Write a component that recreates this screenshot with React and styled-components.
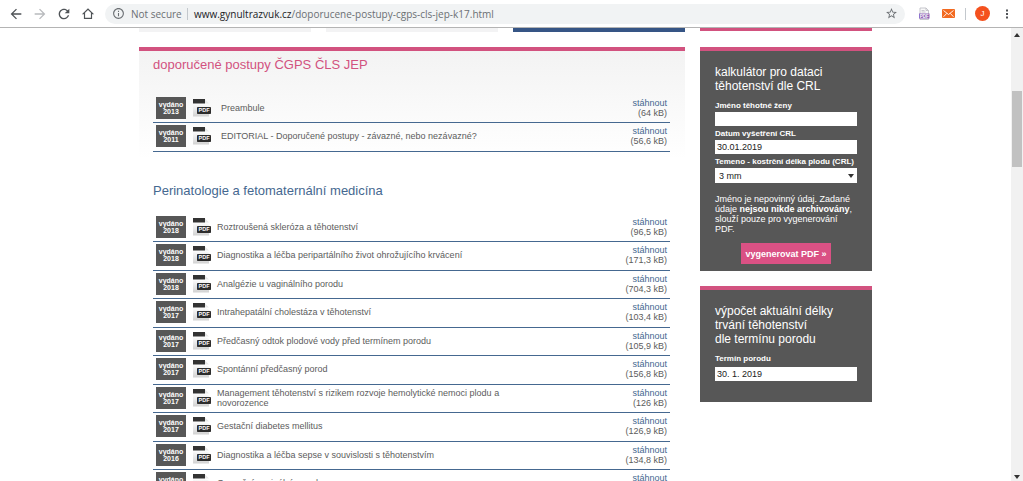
import React from "react";
import styled, { createGlobalStyle } from "styled-components";

const color = {
  pink: "#d2527f",
  blue: "#456890",
  navy: "#365585",
  dark: "#575757",
  text: "#5c5c5c",
};

const GlobalStyle = createGlobalStyle`
  *, *::before, *::after { box-sizing: border-box; }
  body { margin: 0; background: #fff; font-family: "Liberation Sans", Arial, sans-serif; }
  button, input, select { font-family: inherit; }
`;

const Browser = styled.div`
  display: flex;
  flex-direction: column;
  height: 100vh;
  overflow: hidden;
`;

const Toolbar = styled.header`
  display: flex;
  align-items: center;
  flex: none;
  height: 28px;
  padding: 0 4px;
  border-bottom: 1px solid #b4b4b4;
  background: #fff;
`;

const ToolButton = styled.button`
  display: flex;
  align-items: center;
  justify-content: center;
  width: 24px;
  height: 24px;
  padding: 0;
  border: 0;
  background: none;
  color: ${(p) => (p.$faint ? "#b8babd" : "#4f5357")};
`;

const AddressBar = styled.div`
  display: flex;
  align-items: center;
  flex: 1;
  min-width: 0;
  height: 20px;
  margin: 0 7px 0 5px;
  padding: 0 7px;
  border-radius: 10px;
  background: #f1f3f4;
  color: #6b6f73;
  font: 10px/20px "Open Sans", "Noto Sans", sans-serif;
  white-space: nowrap;
`;

const Security = styled.span`
  display: flex;
  align-items: center;
  gap: 6px;
  width: 75px;
`;

const Url = styled.span`
  flex: 1;
  min-width: 0;
  overflow: hidden;
  padding-left: 6px;
`;

const Host = styled.span`
  color: #202124;
`;

const Divider = styled.span`
  width: 1px;
  height: 12px;
  background: #c3c8cd;
`;

const ToolDivider = styled(Divider)`
  margin: 0 9px 0 5px;
`;

const Avatar = styled.button`
  width: 15px;
  height: 15px;
  margin-right: 5px;
  padding: 0;
  border: 0;
  border-radius: 50%;
  background: #f4511e;
  color: #fff;
  font-size: 8px;
  line-height: 15px;
`;

const Viewport = styled.div`
  display: flex;
  flex: 1;
  min-height: 0;
`;

const Page = styled.div`
  flex: 1;
  min-width: 0;
  overflow: hidden;
`;

const Columns = styled.div`
  display: grid;
  grid-template-columns: minmax(0, 1fr) 172px;
  gap: 15px;
  max-width: 733px;
  margin: 0 auto;
  align-items: start;
`;

const Stack = styled.div`
  display: flex;
  flex-direction: column;
  gap: 15px;
`;

const Tabs = styled.nav`
  display: grid;
  grid-template-columns: repeat(3, 1fr);
  gap: 15px;
`;

const Tab = styled.div`
  height: 4px;
  background: ${(p) => (p.$active ? color.navy : "#f3f3f4")};
`;

const BoxEnd = styled.div`
  height: 4px;
  border-top: 3px solid ${color.pink};
`;

const Article = styled.main`
  padding: 6px 15px 0 14px;
  border-top: 4px solid ${color.pink};
  background: linear-gradient(#f3f3f3, #fff) no-repeat 0 0 / 100% 108px;
`;

const Title = styled.h1`
  margin: 0 0 22px;
  color: ${color.pink};
  font-size: 13px;
  font-weight: 400;
  line-height: 16px;
`;

const Subtitle = styled.h2`
  margin: 31px 0 15px;
  color: ${color.blue};
  font-size: 13px;
  font-weight: 400;
  line-height: 16px;
`;

const DocTable = styled.table`
  width: 100%;
  border-spacing: 0;
  color: ${color.text};
  font-size: 9px;
  line-height: 10px;
`;

const DocRow = styled.tr`
  height: 28px;
  &:nth-child(even) { height: 29px; }
`;

const Cell = styled.td`
  padding: 0 0 2px;
  border-bottom: 1px solid ${color.blue};
  vertical-align: middle;
`;

const YearCell = styled(Cell)`
  width: 33px;
  padding-left: 3px;
`;

const Year = styled.div`
  width: 30px;
  height: 22px;
  padding-top: 4px;
  background: ${color.dark};
  color: #fff;
  font-size: 7px;
  font-weight: 700;
  line-height: 7px;
  text-align: center;
`;

const IconCell = styled(Cell)`
  width: 25px;
  padding-left: 7px;
  svg { display: block; }
`;

const NameCell = styled(Cell)`
  padding-left: ${(p) => (p.$wide ? 10 : 6)}px;
  padding-right: 90px;
`;

const FileCell = styled(Cell)`
  width: 60px;
  padding-right: 3px;
  text-align: right;
`;

const FileLink = styled.a`
  display: block;
  color: ${color.blue};
  text-decoration: none;
`;

const Box = styled.form`
  padding: 14px 15px ${(p) => (p.$roomy ? 21 : 7)}px;
  border-top: 4px solid ${color.pink};
  background: ${color.dark};
  color: #fff;
`;

const BoxTitle = styled.h2`
  margin: 0 0 8px;
  font-size: 12px;
  font-weight: 400;
  line-height: 14px;
`;

const Field = styled.label`
  display: flex;
  flex-direction: column;
  gap: ${(p) => (p.$roomy ? 3 : 1)}px;
  margin-bottom: ${(p) => (p.$roomy ? 0 : 3)}px;
  font-size: 8px;
  font-weight: 700;
  line-height: 10px;
  white-space: nowrap;
`;

const Input = styled.input`
  width: 100%;
  height: 14px;
  padding: 0 2px;
  border: 0;
  border-radius: 0;
  background: #fff;
  color: #222;
  font-size: 9px;
`;

const SelectFrame = styled.span`
  display: grid;
  align-items: center;
  height: 15px;
  background: #fff;
  color: #111;
  > * { grid-area: 1 / 1; }
  svg { justify-self: end; margin-right: 3px; pointer-events: none; }
`;

const Select = styled.select`
  width: 100%;
  height: 15px;
  padding: 0 4px;
  border: 0;
  border-radius: 0;
  appearance: none;
  background: #fff;
  color: #222;
  font-size: 9px;
`;

const Note = styled.p`
  margin: 11px 0 9px;
  font-size: 9px;
  line-height: 10px;
`;

const Submit = styled.button`
  display: block;
  height: 21px;
  margin: 0 auto;
  padding: 0 4px;
  border: 0;
  background: #da5184;
  color: #fff;
  font-size: 9px;
  font-weight: 700;
  white-space: nowrap;
`;

const Scrollbar = styled.div`
  display: flex;
  flex-direction: column;
  align-items: center;
  justify-content: space-between;
  width: 12px;
  padding: 4px 0 1px;
  background: #f1f1f1;
`;

const Track = styled.div`
  flex: 1;
  width: 10px;
  padding-top: 53px;
`;

const Thumb = styled.div`
  height: 76px;
  background: #c1c1c1;
`;

const paths = {
  back: "M20 11H7.83l5.59-5.59L12 4l-8 8 8 8 1.41-1.41L7.83 13H20v-2z",
  forward: "M12 4l-1.41 1.41L16.17 11H4v2h12.17l-5.58 5.59L12 20l8-8z",
  reload:
    "M17.65 6.35C16.2 4.9 14.21 4 12 4c-4.42 0-7.99 3.58-7.99 8s3.57 8 7.99 8c3.73 0 6.84-2.55 7.73-6h-2.08c-.82 2.33-3.04 4-5.65 4-3.31 0-6-2.69-6-6s2.69-6 6-6c1.66 0 3.14.69 4.22 1.78L13 11h7V4l-2.35 2.35z",
  home: "M12 5L17 10V18.500H7V10zM12 2L1.500 12.500H5V20.500H19V12.500H22.500z",
  info: "M11 7h2v2h-2zm0 4h2v6h-2zm1-9C6.48 2 2 6.48 2 12s4.48 10 10 10 10-4.48 10-10S17.52 2 12 2zm0 18c-4.41 0-8-3.59-8-8s3.59-8 8-8 8 3.59 8 8-3.59 8-8 8z",
  star: "M22 9.24l-7.19-.62L12 2 9.19 8.63 2 9.24l5.46 4.73L5.82 21 12 17.27 18.18 21l-1.63-7.03L22 9.24zM12 15.4l-3.76 2.27 1-4.28-3.32-2.88 4.38-.38L12 6.1l1.71 4.04 4.38.38-3.32 2.88 1 4.28L12 15.4z",
  more: "M10 3h4v4h-4zM10 10h4v4h-4zM10 17h4v4h-4z",
};

const Glyph = ({ name, size }) => (
  <svg width={size} height={size} viewBox="0 0 24 24" fill="currentColor" fillRule="evenodd" aria-hidden="true">
    <path d={paths[name]} />
  </svg>
);

const Arrow = ({ down, size = 6 }) => (
  <svg width={size} height={size} viewBox="0 0 6 6" fill="#333" aria-hidden="true">
    <path d={down ? "M0 1h6L3 5z" : "M0 5h6L3 1z"} />
  </svg>
);

const PdfExtension = () => (
  <svg width="12" height="14" viewBox="0 0 12 14" aria-hidden="true">
    <path d="M2 1h6l2.500 2.500V12.500H2z" fill="#fafafa" stroke="#b9b9c0" strokeWidth=".8" />
    <path d="M8 1v2.500h2.500M3.500 3.500h3M3.500 5h4" fill="none" stroke="#b9b9c0" strokeWidth=".8" />
    <rect x="1" y="6.500" width="10.500" height="5" fill="#8a5fb5" />
    <text x="6.200" y="10.600" fontSize="4.500" fontWeight="700" fill="#fff" textAnchor="middle">PDF</text>
  </svg>
);

const Envelope = () => (
  <svg width="13" height="9" viewBox="0 0 13 9" aria-hidden="true">
    <rect width="13" height="9" rx="1" fill="#f26a21" />
    <path d="M1.500 1.500L6.500 5.500l5-4M1.500 7.800L4.800 4.300M11.500 7.800L8.200 4.300" fill="none" stroke="#fff" strokeWidth=".9" />
  </svg>
);

const PdfFile = () => (
  <svg width="18" height="18" viewBox="0 0 18 18" role="img" aria-label="PDF">
    <defs>
      <linearGradient id="sheet" x1="0" y1="0" x2="0" y2="1">
        <stop offset="0" stopColor="#fff" />
        <stop offset="1" stopColor="#d2d2d2" />
      </linearGradient>
    </defs>
    <path d="M0 4h12l4 3v10.500H0z" fill="url(#sheet)" />
    <path d="M0 0h12v4.500H0z" fill="#333" />
    <path d="M12 .5L16 4.500h-4z" fill="#e9e9e9" />
    <rect x="4" y="8" width="14" height="7" rx=".8" fill="#2d2d2d" />
    <text x="11" y="13.400" fontSize="5.500" fontWeight="700" fill="#fff" textAnchor="middle">PDF</text>
  </svg>
);

const general = [
  ["2013", "Preambule", "64 kB"],
  ["2011", "EDITORIAL - Doporučené postupy - závazné, nebo nezávazné?", "56,6 kB"],
];

const perinatology = [
  ["2018", "Roztroušená skleróza a těhotenství", "96,5 kB"],
  ["2018", "Diagnostika a léčba peripartálního život ohrožujícího krvácení", "171,3 kB"],
  ["2018", "Analgézie u vaginálního porodu", "704,3 kB"],
  ["2017", "Intrahepatální cholestáza v těhotenství", "103,4 kB"],
  ["2017", "Předčasný odtok plodové vody před termínem porodu", "105,9 kB"],
  ["2017", "Spontánní předčasný porod", "156,8 kB"],
  ["2017", "Management těhotenství s rizikem rozvoje hemolytické nemoci plodu a novorozence", "126 kB"],
  ["2017", "Gestační diabetes mellitus", "126,9 kB"],
  ["2016", "Diagnostika a léčba sepse v souvislosti s těhotenstvím", "134,8 kB"],
  ["2016", "Operační vaginální porod", "120 kB"],
];

const Documents = ({ items, wide }) => (
  <DocTable>
    <tbody>
      {items.map(([year, name, size]) => (
        <DocRow key={name}>
          <YearCell>
            <Year>vydáno<br />{year}</Year>
          </YearCell>
          <IconCell><PdfFile /></IconCell>
          <NameCell $wide={wide}>{name}</NameCell>
          <FileCell>
            <FileLink href="#">stáhnout</FileLink>({size})
          </FileCell>
        </DocRow>
      ))}
    </tbody>
  </DocTable>
);

export default function App() {
  return (
    <Browser>
      <GlobalStyle />
      <Toolbar>
        <ToolButton aria-label="Back"><Glyph name="back" size={16} /></ToolButton>
        <ToolButton aria-label="Forward" $faint><Glyph name="forward" size={16} /></ToolButton>
        <ToolButton aria-label="Reload"><Glyph name="reload" size={16} /></ToolButton>
        <ToolButton aria-label="Home"><Glyph name="home" size={14} /></ToolButton>
        <AddressBar>
          <Security><Glyph name="info" size={13} />Not secure</Security>
          <Divider />
          <Url><Host>www.gynultrazvuk.cz</Host>/doporucene-postupy-cgps-cls-jep-k17.html</Url>
          <Glyph name="star" size={13} />
        </AddressBar>
        <ToolButton aria-label="PDF extension"><PdfExtension /></ToolButton>
        <ToolButton aria-label="Mail extension"><Envelope /></ToolButton>
        <ToolDivider />
        <Avatar>J</Avatar>
        <ToolButton aria-label="Menu"><Glyph name="more" size={12} /></ToolButton>
      </Toolbar>
      <Viewport>
        <Page>
          <Columns>
            <Stack>
              <Tabs><Tab /><Tab /><Tab $active /></Tabs>
              <Article>
                <Title>doporučené postupy ČGPS ČLS JEP</Title>
                <Documents items={general} wide />
                <Subtitle>Perinatologie a fetomaternální medicína</Subtitle>
                <Documents items={perinatology} />
              </Article>
            </Stack>
            <Stack as="aside">
              <BoxEnd />
              <Box onSubmit={(e) => e.preventDefault()}>
                <BoxTitle>kalkulátor pro dataci těhotenství dle CRL</BoxTitle>
                <Field>Jméno těhotné ženy<Input type="text" /></Field>
                <Field>Datum vyšetření CRL<Input type="text" defaultValue="30.01.2019" /></Field>
                <Field>
                  Temeno - kostrční délka plodu (CRL)
                  <SelectFrame>
                    <Select defaultValue="3"><option value="3">3 mm</option></Select>
                    <Arrow down />
                  </SelectFrame>
                </Field>
                <Note>
                  Jméno je nepovinný údaj. Zadané údaje <b>nejsou nikde archivovány</b>, slouží pouze pro vygenerování PDF.
                </Note>
                <Submit type="submit">vygenerovat PDF »</Submit>
              </Box>
              <Box $roomy onSubmit={(e) => e.preventDefault()}>
                <BoxTitle>výpočet aktuální délky trvání těhotenství<br />dle termínu porodu</BoxTitle>
                <Field $roomy>Termín porodu<Input type="text" defaultValue="30. 1. 2019" /></Field>
              </Box>
            </Stack>
          </Columns>
        </Page>
        <Scrollbar>
          <Arrow />
          <Track><Thumb /></Track>
          <Arrow down />
        </Scrollbar>
      </Viewport>
    </Browser>
  );
}
